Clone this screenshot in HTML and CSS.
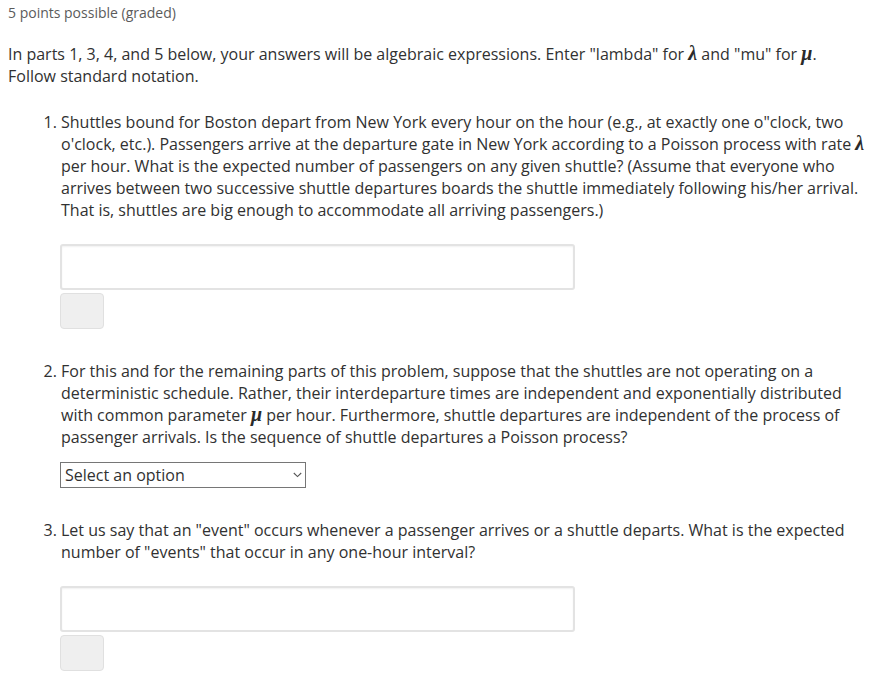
FILE: index.html
```html
<!DOCTYPE html>
<html>
<head>
<meta charset="utf-8">
<link rel="stylesheet" href="styles.css">
</head>
<body>
<div class="problem">
  <div class="points">5 points possible (graded)</div>
  <p class="intro">In parts 1, 3, 4, and 5 below, your answers will be algebraic expressions. Enter "lambda" for <span class="math">λ</span> and "mu" for <span class="math">μ</span>.<br>Follow standard notation.</p>
  <ol class="parts">
    <li class="part">
      <p class="q">Shuttles bound for Boston depart from New York every hour on the hour (e.g., at exactly one o"clock, two o'clock, etc.). Passengers arrive at the departure gate in New York according to a Poisson process with rate <span class="math">λ</span> per hour. What is the expected number of passengers on any given shuttle? (Assume that everyone who arrives between two successive shuttle departures boards the shuttle immediately following his/her arrival. That is, shuttles are big enough to accommodate all arriving passengers.)</p>
      <div class="answer">
        <input class="field" type="text">
        <button class="preview" type="button"></button>
      </div>
    </li>
    <li class="part">
      <p class="q">For this and for the remaining parts of this problem, suppose that the shuttles are not operating on a deterministic schedule. Rather, their interdeparture times are independent and exponentially distributed with common parameter <span class="math">μ</span> per hour. Furthermore, shuttle departures are independent of the process of passenger arrivals. Is the sequence of shuttle departures a Poisson process?</p>
      <div class="choice">
        <select class="select"><option>Select an option</option></select>
        <svg class="chev" width="9" height="6" viewBox="0 0 9 6"><path d="M0.8 1 L4.5 4.6 L8.2 1" fill="none" stroke="#555" stroke-width="1.1"/></svg>
      </div>
    </li>
    <li class="part">
      <p class="q">Let us say that an "event" occurs whenever a passenger arrives or a shuttle departs. What is the expected number of "events" that occur in any one-hour interval?</p>
      <div class="answer">
        <input class="field" type="text">
        <button class="preview" type="button"></button>
      </div>
    </li>
  </ol>
</div>
</body>
</html>
```
FILE: styles.css
```css
html, body {
  margin: 0;
  padding: 0;
  background: #fff;
}
body {
  font-family: "Open Sans", "Noto Sans", sans-serif;
  color: #313131;
  font-size: 16px;
  line-height: 22px;
}
.problem {
  padding: 3px 8px 0 8px;
}
.points {
  font-size: 14px;
  line-height: 20px;
  color: #5b5b5b;
}
.intro {
  margin: 20px 0 0 0;
}
.math {
  font-family: "Liberation Serif", "DejaVu Serif", serif;
  font-style: italic;
  font-weight: bold;
  font-size: 20px;
  line-height: 0;
  color: #2a2a2a;
}
.parts {
  margin: 24px 0 0 0;
  padding: 0 0 0 53px;
}
.part + .part {
  margin-top: 31px;
}
.q {
  margin: 0;
}
.answer {
  display: flex;
  flex-direction: column;
  align-items: flex-start;
  gap: 3px;
  margin: 23px 0 0 -1px;
}
.field {
  box-sizing: border-box;
  width: 515px;
  height: 46px;
  border: 2px solid #e3e3e3;
  border-radius: 3px;
  background: #fff;
  box-shadow: inset 0 1px 2px rgba(0,0,0,0.06);
  margin: 0;
  font: inherit;
}
.preview {
  box-sizing: border-box;
  width: 44px;
  height: 36px;
  background: #efefef;
  border: 1px solid #e0e0e0;
  border-radius: 4px;
  margin: 0;
  padding: 0;
}
.choice {
  position: relative;
  width: 246px;
  margin: 14px 0 0 -1px;
}
.select {
  display: block;
  box-sizing: border-box;
  width: 246px;
  height: 26px;
  border: 1px solid #767676;
  border-radius: 0;
  background: #fff;
  color: #313131;
  font-family: "Open Sans", sans-serif;
  font-size: 16px;
  padding: 0 4px;
  margin: 0;
  appearance: none;
  -webkit-appearance: none;
}
.chev {
  position: absolute;
  right: 4px;
  top: 10px;
  pointer-events: none;
}
```
